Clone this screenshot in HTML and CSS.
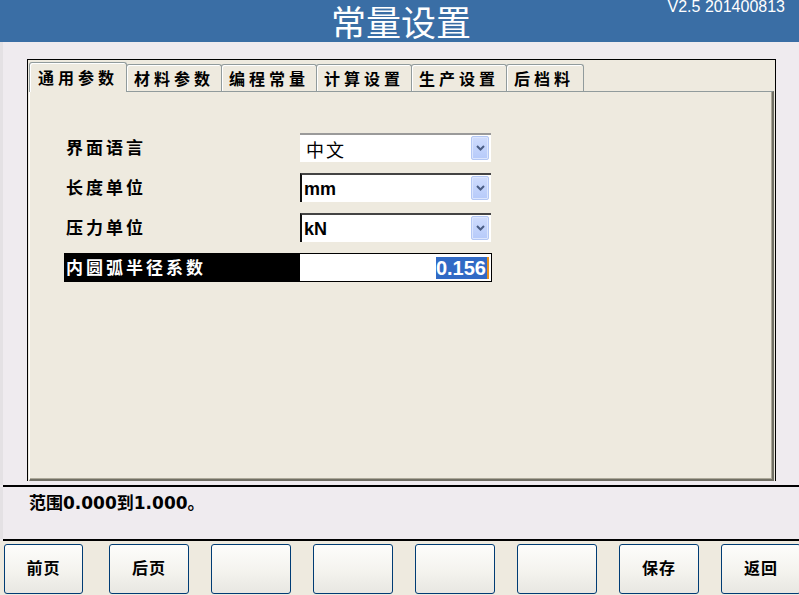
FILE: index.html
```html
<!DOCTYPE html>
<html lang="zh">
<head>
<meta charset="utf-8">
<title>常量设置</title>
<link rel="stylesheet" href="styles.css">
</head>
<body>
<div class="screen">
  <header class="topbar">
    <div class="side"></div>
    <h1 class="title">常量设置</h1>
    <div class="version">V2.5 201400813</div>
  </header>

  <main class="main">
    <div class="frame">
      <nav class="tabs">
        <div class="tab active">通用参数</div>
        <div class="tab">材料参数</div>
        <div class="tab">编程常量</div>
        <div class="tab">计算设置</div>
        <div class="tab">生产设置</div>
        <div class="tab">后档料</div>
      </nav>
      <section class="panel">
        <div class="form">
          <div class="label">界面语言</div>
          <div class="combo combo-first"><span class="cjk-val">中文</span><span class="drop"><svg width="9" height="6" viewBox="0 0 9 6"><path d="M1 1 L4.5 4.5 L8 1" fill="none" stroke="#4a5d84" stroke-width="2"/></svg></span></div>

          <div class="label">长度单位</div>
          <div class="combo"><span class="lat-val">mm</span><span class="drop"><svg width="9" height="6" viewBox="0 0 9 6"><path d="M1 1 L4.5 4.5 L8 1" fill="none" stroke="#4a5d84" stroke-width="2"/></svg></span></div>

          <div class="label">压力单位</div>
          <div class="combo"><span class="lat-val">kN</span><span class="drop"><svg width="9" height="6" viewBox="0 0 9 6"><path d="M1 1 L4.5 4.5 L8 1" fill="none" stroke="#4a5d84" stroke-width="2"/></svg></span></div>

          <div class="label focused">内圆弧半径系数</div>
          <div class="field"><span class="sel">0.156</span><span class="caret"></span></div>
        </div>
      </section>
    </div>
  </main>

  <div class="rule"></div>
  <div class="status">范围0.000到1.000。</div>
  <div class="rule"></div>

  <footer class="buttons">
    <button class="btn">前页</button>
    <button class="btn">后页</button>
    <button class="btn"></button>
    <button class="btn"></button>
    <button class="btn"></button>
    <button class="btn"></button>
    <button class="btn">保存</button>
    <button class="btn">返回</button>
  </footer>
</div>
</body>
</html>
```

FILE: styles.css
```css
* { box-sizing: border-box; }

html, body {
  margin: 0;
  padding: 0;
  background: #efebef;
}

.screen {
  width: 799px;
  height: 595px;
  overflow: hidden;
  display: flex;
  flex-direction: column;
  font-family: "Noto Sans CJK SC", "DejaVu Sans", sans-serif;
  color: #000;
}

/* header */
.topbar {
  height: 42px;
  flex: none;
  background: #3a6ea5;
  display: grid;
  grid-template-columns: 1fr auto 1fr;
  color: #fff;
}
.title {
  margin: 0;
  font-size: 35px;
  font-weight: 400;
  line-height: 42px;
  height: 42px;
  padding-left: 3px;
}
.version {
  justify-self: end;
  align-self: start;
  font-family: "Liberation Sans", sans-serif;
  font-size: 16px;
  line-height: 16px;
  margin-top: -1px;
  padding-right: 14px;
}

/* main area */
.main {
  height: 443px;
  flex: none;
  border-left: 3px solid #e4e1e4;
  padding: 17px 0 0 24px;
}
.frame {
  width: 749px;
  height: 422px;
  border: 1px solid #000;
  border-bottom: none;
  background: #eeeadf;
  padding: 1px 1px 0 1px;
  display: flex;
  flex-direction: column;
}
.tabs {
  height: 30px;
  flex: none;
  display: flex;
  align-items: flex-end;
  position: relative;
  z-index: 1;
}
.tab {
  height: 27px;
  padding: 0 7px 0 7px;
  background: #eeeadf;
  border: 1px solid #919b9c;
  border-bottom: none;
  border-radius: 3px 3px 0 0;
  box-shadow: inset 1px 1px 0 #fff;
  font-size: 16px;
  font-weight: 700;
  letter-spacing: 4px;
  line-height: 26px;
  white-space: nowrap;
}
.tab:last-child { padding-right: 9px; }
.tab + .tab { margin-left: -1px; }
.tab.active {
  height: 30px;
  margin-bottom: -1px;
  padding: 0 8px;
  line-height: 28px;
  width: 98px;
}
.panel {
  flex: 1;
  background: #eeeadf;
  border-top: 1px solid #919b9c;
  border-left: 1px solid #fff;
  border-right: 2px solid #716f64;
  border-bottom: 2px solid #716f64;
  box-shadow: inset -1px -1px 0 #aca899;
  padding: 41px 0 0 34px;
}

/* form */
.form {
  display: grid;
  grid-template-columns: 236px 192px;
  grid-auto-rows: 29px;
  row-gap: 11px;
}
.label {
  display: flex;
  align-items: center;
  padding-left: 2px;
  padding-bottom: 2px;
  font-size: 17px;
  font-weight: 700;
  letter-spacing: 3px;
}
.label.focused {
  background: #000;
  color: #fff;
}
.combo {
  width: 191px;
  position: relative;
  background: #fff;
  border-top: 2px solid #444;
  border-left: 2px solid #111;
  display: flex;
  align-items: center;
  padding-left: 2px;
}
.combo-first {
  border-top: 2px solid #9a9a9a;
  border-left: none;
  padding-left: 6px;
}
.cjk-val {
  font-size: 18px;
  letter-spacing: 2px;
  line-height: 22px;
}
.lat-val {
  font-family: "Liberation Sans", sans-serif;
  font-size: 18px;
  font-weight: 700;
  line-height: 20px;
  padding-top: 1px;
}
.drop {
  position: absolute;
  right: 2px;
  top: 1px;
  width: 18px;
  height: 24px;
  border: 1px solid #b3c7f4;
  border-radius: 2px;
  background: linear-gradient(#cfdcfd, #b6cafa);
  box-shadow: inset 0 0 0 1px #dbe5fd;
  display: flex;
  align-items: center;
  justify-content: center;
}

.field {
  background: #fff;
  border: 1px solid #000;
  border-left: none;
  display: flex;
  justify-content: flex-end;
  align-items: center;
  padding-right: 2px;
}
.sel {
  background: #316ac5;
  color: #fff;
  font-family: "Liberation Sans", sans-serif;
  font-size: 20px;
  font-weight: 700;
  line-height: 22px;
  height: 22px;
  padding: 0 1px 0 0;
}
.caret {
  width: 2px;
  height: 22px;
  background: #e8901c;
}

/* status */
.rule {
  height: 2px;
  flex: none;
  margin-left: 3px;
  background: #000;
}
.status {
  height: 52px;
  flex: none;
  border-left: 3px solid #e4e1e4;
  padding: 4px 0 0 26px;
  font-size: 17px;
  font-weight: 700;
  line-height: 24px;
  font-family: "DejaVu Sans", "Noto Sans CJK SC", sans-serif;
}

/* buttons */
.buttons {
  flex: 1;
  background: #eeeadf;
  display: flex;
  gap: 22px;
  padding: 3px 0 0 4px;
}
.btn {
  flex: none;
  width: 80px;
  height: 50px;
  border: 1px solid #003c74;
  border-radius: 3px;
  background: linear-gradient(#fdfdfb 0%, #f4f3ee 55%, #e8e7e2 100%);
  font-family: "Noto Sans CJK SC", sans-serif;
  font-size: 16px;
  font-weight: 700;
  color: #000;
  padding: 0 0 4px 0;
  letter-spacing: 1px;
}
.btn:first-child {
  width: 79px;
  margin-right: 4px;
}
```
